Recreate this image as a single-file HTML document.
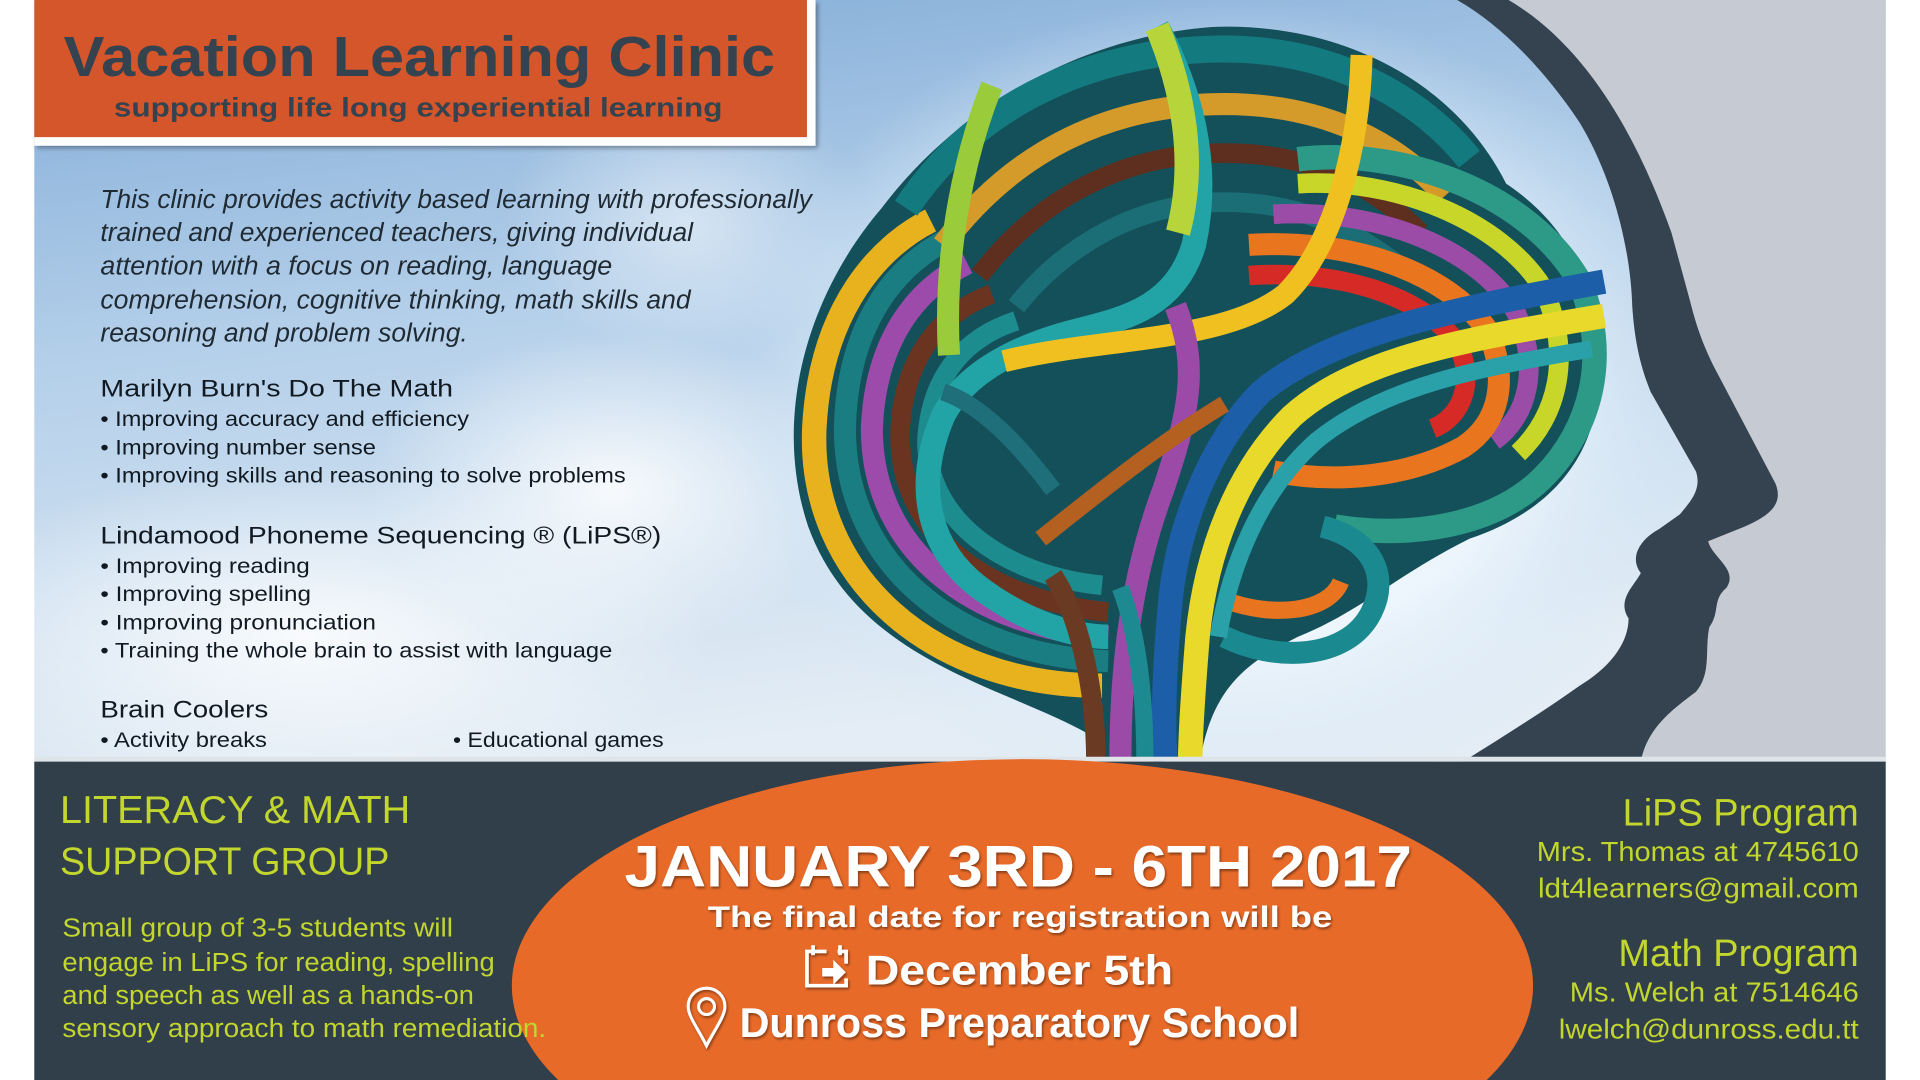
<!DOCTYPE html>
<html><head><meta charset="utf-8"><style>
html,body{margin:0;padding:0;background:#fff;width:1920px;height:1080px;overflow:hidden}
svg{display:block}
text{font-family:"Liberation Sans",sans-serif}
</style></head><body>
<svg width="1920" height="1080" viewBox="0 0 1568 882" xmlns="http://www.w3.org/2000/svg">
<defs>
<linearGradient id="sky" x1="0" y1="0" x2="0.3" y2="1">
<stop offset="0" stop-color="#7faad6"/><stop offset="0.45" stop-color="#b5d0ea"/><stop offset="1" stop-color="#e4edf5"/>
</linearGradient>
<radialGradient id="glow" cx="0.5" cy="0.5" r="0.5">
<stop offset="0.6" stop-color="#eef6fd" stop-opacity="0.95"/><stop offset="1" stop-color="#cfe4f5" stop-opacity="0"/>
</radialGradient>
<radialGradient id="cloud" cx="0.5" cy="0.5" r="0.5">
<stop offset="0" stop-color="#ffffff" stop-opacity="0.85"/><stop offset="1" stop-color="#ffffff" stop-opacity="0"/>
</radialGradient>
<filter id="ts"><feDropShadow dx="1" dy="1.5" stdDeviation="1" flood-color="#000" flood-opacity="0.45"/></filter>
<filter id="bs"><feDropShadow dx="2" dy="2" stdDeviation="2" flood-color="#000" flood-opacity="0.35"/></filter>
<clipPath id="bot"><rect x="28" y="618" width="1512" height="264"/></clipPath>
</defs>
<rect x="28" y="0" width="1512" height="622" fill="url(#sky)"/>
<ellipse cx="250" cy="520" rx="330" ry="140" fill="url(#cloud)"/>
<ellipse cx="500" cy="400" rx="200" ry="130" fill="url(#cloud)"/>
<ellipse cx="560" cy="180" rx="150" ry="110" fill="url(#cloud)" opacity="0.6"/>
<ellipse cx="1000" cy="330" rx="400" ry="330" fill="url(#glow)"/>
<path d="M1230,0 L1540,0 L1540,622 L1340,622 C1345,595 1365,580 1385,565 C1398,550 1392,530 1396,512 C1405,500 1398,490 1410,480 C1420,465 1398,455 1395,442 L1425,430 C1448,420 1456,410 1450,395 L1400,300 C1390,280 1385,265 1380,245 L1365,190 C1340,120 1300,40 1230,0 Z" fill="#c6cbd3"/>
<path d="M1190,0 L1232,0 C1300,40 1340,120 1365,190 L1380,245 C1385,265 1390,280 1400,300 L1450,395 C1456,410 1448,420 1425,430 L1395,442 C1398,455 1420,465 1410,480 C1398,490 1405,500 1396,512 C1392,530 1398,550 1385,565 C1365,580 1345,595 1340,622 L1195,622 C1230,600 1262,580 1290,560 C1315,545 1330,525 1330,505 C1320,490 1335,478 1340,468 C1330,455 1340,440 1355,432 L1372,420 C1380,410 1390,400 1385,385 L1348,320 C1340,300 1335,280 1333,250 C1332,210 1320,150 1290,100 C1260,55 1225,20 1190,0 Z" fill="#34434f"/>
<path d="M890,600 C820,560 700,540 660,430 C630,340 660,240 720,170 C780,90 880,30 990,22 C1100,18 1190,70 1230,150 C1290,190 1310,250 1305,320 C1300,380 1260,420 1200,440 C1140,470 1110,500 1060,520 C1020,540 990,560 980,622 L905,622 Z" fill="#14505a"/>
<g fill="none" stroke-linecap="butt">
<path d="M900,560 C760,560 660,470 665,350 C670,250 720,200 760,180" stroke="#e8b21e" stroke-width="20"/>
<path d="M905,540 C780,535 690,460 690,350 C692,260 735,215 775,195" stroke="#1a7d82" stroke-width="18"/>
<path d="M905,520 C795,512 712,450 712,350 C715,275 750,235 790,215" stroke="#9c4bab" stroke-width="18"/>
<path d="M905,500 C810,490 735,440 735,355 C737,290 770,255 810,240" stroke="#6b3420" stroke-width="16"/>
<path d="M900,478 C820,470 757,425 757,360 C760,305 790,275 830,262" stroke="#1d8c8e" stroke-width="16"/>
<path d="M740,170 C800,80 900,40 1000,40 C1090,40 1160,80 1200,130" stroke="#137a7f" stroke-width="22"/>
<path d="M770,200 C830,120 910,85 1000,85 C1080,85 1140,115 1180,160" stroke="#d49a2a" stroke-width="18"/>
<path d="M800,225 C850,160 920,125 1000,125 C1070,125 1120,150 1160,190" stroke="#5e2f1e" stroke-width="16"/>
<path d="M830,250 C870,200 930,165 1000,165 C1060,165 1100,185 1140,215" stroke="#1b6e76" stroke-width="16"/>
<path d="M1060,130 C1150,120 1250,160 1290,230 C1315,290 1300,350 1260,390 C1220,430 1150,440 1090,430" stroke="#2c9a86" stroke-width="20"/>
<path d="M1060,150 C1140,145 1225,180 1260,235 C1285,290 1272,340 1240,370" stroke="#c8d62a" stroke-width="16"/>
<path d="M1040,175 C1120,170 1205,200 1238,255 C1258,300 1248,340 1220,360" stroke="#9a4ca6" stroke-width="16"/>
<path d="M1020,200 C1100,195 1180,220 1215,270 C1232,310 1225,345 1195,365 C1150,390 1090,395 1040,385" stroke="#e9751e" stroke-width="18"/>
<path d="M1020,225 C1090,220 1160,240 1190,280 C1205,310 1195,340 1170,350" stroke="#d62a26" stroke-width="16"/>
<path d="M1000,520 C1040,540 1100,540 1120,500 C1135,470 1120,440 1080,430" stroke="#1a8a90" stroke-width="18"/>
<path d="M1000,490 C1040,505 1085,500 1095,475" stroke="#e87420" stroke-width="14"/>
<path d="M945,22 C970,70 990,130 975,200 C960,250 920,260 880,270 C840,280 790,300 770,340 C745,400 760,450 800,480 C840,510 880,520 905,520" stroke="#22a3a5" stroke-width="20"/>
<path d="M945,22 C965,70 978,130 962,190" stroke="#b7d43a" stroke-width="20"/>
<path d="M1112,45 C1110,120 1090,200 1050,240 C1000,280 900,275 820,295" stroke="#f0c020" stroke-width="18"/>
<path d="M810,70 C790,120 770,200 775,290" stroke="#9acb3a" stroke-width="18"/>
<path d="M1310,230 C1200,250 1090,270 1030,320 C990,360 960,430 955,500 C950,560 950,600 952,622" stroke="#1c5fa8" stroke-width="20"/>
<path d="M1310,258 C1210,275 1110,290 1055,340 C1010,385 985,450 978,520 C974,570 972,600 972,622" stroke="#e8d92a" stroke-width="20"/>
<path d="M1300,285 C1210,300 1130,315 1075,360 C1030,400 1005,460 995,520" stroke="#2aa0a8" stroke-width="14"/>
<path d="M915,622 C915,560 920,480 950,400 C970,340 980,300 960,250" stroke="#9b4aa8" stroke-width="18"/>
<path d="M895,622 C895,560 880,500 860,470" stroke="#6b3a22" stroke-width="16"/>
<path d="M935,622 C935,570 930,520 915,480" stroke="#1d8a92" stroke-width="14"/>
<path d="M850,440 C900,400 950,360 1000,330" stroke="#b36020" stroke-width="14"/>
<path d="M860,400 C830,360 800,330 770,320" stroke="#1f6f7a" stroke-width="14"/>
</g>
<rect x="28" y="618" width="1512" height="4" fill="#dfe4e8"/>
<rect x="28" y="0" width="638" height="119" fill="#fff" filter="url(#bs)"/>
<rect x="28" y="0" width="631" height="112" fill="#d4562a"/>
<text x="52" y="62" font-size="46" font-weight="bold" fill="#34434f" textLength="581" lengthAdjust="spacingAndGlyphs">Vacation Learning Clinic</text>
<text x="93" y="95" font-size="22" font-weight="bold" fill="#34434f" textLength="497" lengthAdjust="spacingAndGlyphs">supporting life long experiential learning</text>
<g fill="#1f2a33" font-style="italic" font-size="21">
<text x="82" y="170" textLength="581" lengthAdjust="spacingAndGlyphs">This clinic provides activity based learning with professionally</text>
<text x="82" y="197" textLength="484" lengthAdjust="spacingAndGlyphs">trained and experienced teachers, giving individual</text>
<text x="82" y="224" textLength="418" lengthAdjust="spacingAndGlyphs">attention with a focus on reading, language</text>
<text x="82" y="252" textLength="482" lengthAdjust="spacingAndGlyphs">comprehension, cognitive thinking, math skills and</text>
<text x="82" y="279" textLength="300" lengthAdjust="spacingAndGlyphs">reasoning and problem solving.</text>
</g>
<g fill="#111a22">
<text x="82" y="324" font-size="20" textLength="288" lengthAdjust="spacingAndGlyphs">Marilyn Burn's Do The Math</text>
<text x="82" y="348" font-size="17.5" textLength="301" lengthAdjust="spacingAndGlyphs">• Improving accuracy and efficiency</text>
<text x="82" y="371" font-size="17.5" textLength="225" lengthAdjust="spacingAndGlyphs">• Improving number sense</text>
<text x="82" y="394" font-size="17.5" textLength="429" lengthAdjust="spacingAndGlyphs">• Improving skills and reasoning to solve problems</text>
<text x="82" y="444" font-size="20" textLength="458" lengthAdjust="spacingAndGlyphs">Lindamood Phoneme Sequencing ® (LiPS®)</text>
<text x="82" y="468" font-size="17.5" textLength="171" lengthAdjust="spacingAndGlyphs">• Improving reading</text>
<text x="82" y="491" font-size="17.5" textLength="172" lengthAdjust="spacingAndGlyphs">• Improving spelling</text>
<text x="82" y="514" font-size="17.5" textLength="225" lengthAdjust="spacingAndGlyphs">• Improving pronunciation</text>
<text x="82" y="537" font-size="17.5" textLength="418" lengthAdjust="spacingAndGlyphs">• Training the whole brain to assist with language</text>
<text x="82" y="586" font-size="20" textLength="137" lengthAdjust="spacingAndGlyphs">Brain Coolers</text>
<text x="82" y="610" font-size="17.5" textLength="136" lengthAdjust="spacingAndGlyphs">• Activity breaks</text>
<text x="370" y="610" font-size="17.5" textLength="172" lengthAdjust="spacingAndGlyphs">• Educational games</text>
</g>
<rect x="28" y="622" width="1512" height="260" fill="#313f4a"/>
<ellipse cx="835" cy="805" rx="417" ry="185" fill="#e86a28" clip-path="url(#bot)"/>
<g fill="#c2d62e">
<text x="49" y="672" font-size="32" textLength="286" lengthAdjust="spacingAndGlyphs">LITERACY &amp; MATH</text>
<text x="49" y="714" font-size="32" textLength="269" lengthAdjust="spacingAndGlyphs">SUPPORT GROUP</text>
<text x="51" y="765" font-size="21" textLength="319" lengthAdjust="spacingAndGlyphs">Small group of 3-5 students will</text>
<text x="51" y="793" font-size="21" textLength="353" lengthAdjust="spacingAndGlyphs">engage in LiPS for reading, spelling</text>
<text x="51" y="820" font-size="21" textLength="336" lengthAdjust="spacingAndGlyphs">and speech as well as a hands-on</text>
<text x="51" y="847" font-size="21" textLength="395" lengthAdjust="spacingAndGlyphs">sensory approach to math remediation.</text>
</g>
<g fill="#c2d62e" text-anchor="end">
<text x="1518" y="674" font-size="31">LiPS Program</text>
<text x="1518" y="703" font-size="23" textLength="263" lengthAdjust="spacingAndGlyphs">Mrs. Thomas at 4745610</text>
<text x="1518" y="733" font-size="23" textLength="262" lengthAdjust="spacingAndGlyphs">ldt4learners@gmail.com</text>
<text x="1518" y="789" font-size="31">Math Program</text>
<text x="1518" y="818" font-size="23" textLength="236" lengthAdjust="spacingAndGlyphs">Ms. Welch at 7514646</text>
<text x="1518" y="848" font-size="23" textLength="245" lengthAdjust="spacingAndGlyphs">lwelch@dunross.edu.tt</text>
</g>
<g fill="#fff" font-weight="bold" filter="url(#ts)">
<text x="510" y="724" font-size="48" textLength="643" lengthAdjust="spacingAndGlyphs">JANUARY 3RD - 6TH 2017</text>
<text x="578" y="757" font-size="24" textLength="510" lengthAdjust="spacingAndGlyphs">The final date for registration will be</text>
<text x="707" y="804" font-size="34" textLength="251" lengthAdjust="spacingAndGlyphs">December 5th</text>
<text x="604" y="847" font-size="34" textLength="457" lengthAdjust="spacingAndGlyphs">Dunross Preparatory School</text>
</g>
<g fill="none" stroke="#fff" stroke-width="3" filter="url(#ts)">
<path d="M675,777 L659,777 L659,805 L691,805 L691,799 M691,787 L691,777 L684,777"/>
<path d="M664,772 v8 M686,772 v8"/>
<path d="M672,791 h9 v-6 l9,9 l-9,9 v-6 h-9 z" fill="#fff" stroke-width="1"/>
<path d="M577,854 C570,840 562,830 562,822 C562,813 569,807 577,807 C585,807 592,813 592,822 C592,830 584,840 577,854 Z" stroke-width="2.5"/>
<circle cx="577" cy="822" r="6.5" stroke-width="2.5"/>
</g>
</svg>
</body></html>
